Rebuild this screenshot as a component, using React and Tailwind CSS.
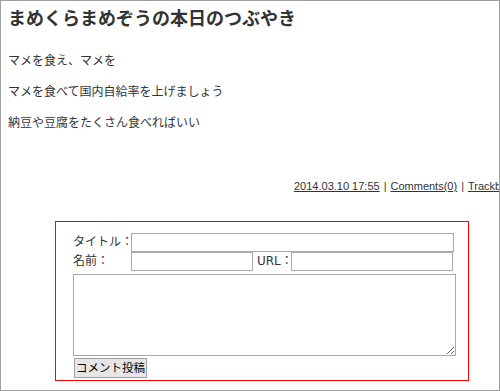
import React from "react";

const font = {
  fontFamily: '"DejaVu Sans", "Noto Sans CJK JP", sans-serif',
};

const App = () => {
  return (
    <div
      className="w-[500px] h-[391px] border border-[#a0a0a0] bg-white text-[#333] overflow-hidden"
      style={font}
    >
      {/* Entry */}
      <div className="px-[7px] pt-[5px]">
        <h1 className="text-[18px] font-bold leading-[26px] text-[#333] whitespace-nowrap">
          まめくらまめぞうの本日のつぶやき
        </h1>
        <div className="mt-[20px] text-[12px] leading-[18px] space-y-[13px]">
          <p>マメを食え、マメを</p>
          <p>マメを食べて国内自給率を上げましょう</p>
          <p>納豆や豆腐をたくさん食べればいい</p>
        </div>
      </div>

      <div className="mt-[46px] pl-[293px] text-[11px] leading-[16px] whitespace-nowrap font-['Liberation_Sans']">
        <a href="#" className="underline text-[#333]">2014.03.10 17:55</a>
        <span className="px-[4px]">|</span>
        <a href="#" className="underline text-[#333]">Comments(0)</a>
        <span className="px-[4px]">|</span>
        <a href="#" className="underline text-[#333]">Trackback(0)</a>
      </div>

      {/* Comment form */}
      <div className="ml-[54px] mt-[27px] w-[414px] h-[160px] border border-[#ff0000] pl-[17px] pt-[11px]">
        <div className="flex items-center h-[19px]">
          <label className="w-[58px] text-[12px] leading-[19px] whitespace-nowrap">タイトル：</label>
          <input
            type="text"
            className="w-[323px] h-[19px] border border-[#a9a9a9] bg-white"
          />
        </div>
        <div className="flex items-center h-[19px]">
          <label className="w-[58px] text-[12px] leading-[19px] whitespace-nowrap">名前：</label>
          <input
            type="text"
            className="w-[122px] h-[19px] border border-[#a9a9a9] bg-white"
          />
          <label className="ml-[4px] w-[34px] text-[12px] leading-[19px] whitespace-nowrap">URL：</label>
          <input
            type="text"
            className="w-[162px] h-[19px] border border-[#a9a9a9] bg-white"
          />
        </div>
        <textarea className="block mt-[3px] w-[383px] h-[82px] border border-[#a9a9a9] bg-white resize" />
        <button
          type="button"
          className="block mt-[2px] ml-[1px] w-[73px] h-[20px] border border-[#a0a0a0] bg-[#e6e6e6] text-[11.5px] leading-[18px] text-black whitespace-nowrap"
        >
          コメント投稿
        </button>
      </div>
    </div>
  );
};

export default App;
